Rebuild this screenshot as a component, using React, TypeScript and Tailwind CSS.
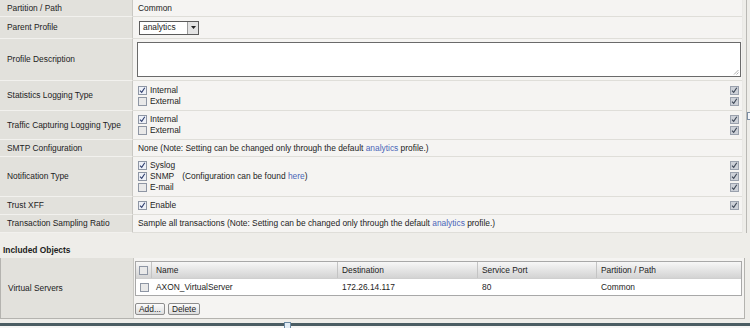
import React from "react";

type Box = { checked?: boolean; dim?: boolean };

function CheckBox({ checked, dim }: Box) {
  return (
    <svg width="9" height="9" viewBox="0 0 9 9" className="shrink-0">
      <rect
        x="0.5"
        y="0.5"
        width="8"
        height="8"
        fill={dim ? "#cdd1d8" : checked ? "#eef1f8" : "#e9e9e9"}
        stroke={dim ? "#9aa1ad" : "#8e96a4"}
      />
      {checked ? (
        <path d="M2 4.6 L3.7 6.4 L6.8 1.8" fill="none" stroke={dim ? "#3d4656" : "#2f3f6f"} strokeWidth="1.1" />
      ) : null}
    </svg>
  );
}

function Link({ children }: { children: React.ReactNode }) {
  return <span className="text-[#4a66b8]">{children}</span>;
}

function Row({
  label,
  h,
  children,
  right,
}: {
  label: string;
  h: string;
  children: React.ReactNode;
  right?: number;
}) {
  return (
    <div className={`flex ${h}`}>
      <div className="flex w-[133px] shrink-0 items-center border-b border-r border-b-[#f2f1ee] border-r-[#c9c8c3] bg-[#e2e1dc] pl-[7px]">
        {label}
      </div>
      <div className="flex flex-1 items-center justify-between border-b border-[#dfded9] bg-[#f5f4f2] pl-[5px] pr-[3px]">
        <div>{children}</div>
        {right ? (
          <div className="flex flex-col gap-[2px]">
            {Array.from({ length: right }).map((_, i) => (
              <CheckBox key={i} checked dim />
            ))}
          </div>
        ) : null}
      </div>
    </div>
  );
}

function CheckLine({ checked, children }: { checked?: boolean; children: React.ReactNode }) {
  return (
    <div className="flex h-[11px] items-center gap-[3px]">
      <CheckBox checked={checked} />
      <span>{children}</span>
    </div>
  );
}

export default function App() {
  return (
    <div className="relative h-[328px] w-[750px] overflow-hidden bg-[#eeede9] font-['Liberation_Sans',Arial,sans-serif] text-[8.4px] leading-none text-[#1c1c1c]">
      <div className="flex">
        <div className="w-[743px] border-r border-[#e9e8e5]">
          <Row label="Partition / Path" h="h-[17px]">
            Common
          </Row>
          <Row label="Parent Profile" h="h-[22px]">
            <div className="ml-[1px] flex h-[14px] w-[60px] items-stretch border border-[#5b5b5b] bg-white">
              <span className="flex flex-1 items-center pl-[3px]">analytics</span>
              <span className="flex w-[11px] items-center justify-center border-l border-[#9a9a9a] bg-[#e3e3e3]">
                <svg width="5" height="3" viewBox="0 0 5 3">
                  <path d="M0 0 H5 L2.5 3 Z" fill="#222" />
                </svg>
              </span>
            </div>
          </Row>
          <div className="flex h-[42px]">
            <div className="flex w-[133px] shrink-0 items-center border-b border-r border-b-[#f2f1ee] border-r-[#c9c8c3] bg-[#e2e1dc] pl-[7px]">
              Profile Description
            </div>
            <div className="flex flex-1 items-center border-b border-[#dfded9] bg-[#f5f4f2] pl-[4px] pr-[1px]">
              <div className="relative h-[35px] w-full border border-[#6a6a6a] bg-white">
                <svg width="6" height="6" viewBox="0 0 6 6" className="absolute bottom-[1px] right-[1px]">
                  <path d="M5.5 1 L1 5.5 M5.5 3.5 L3.5 5.5" stroke="#999" strokeWidth="0.8" />
                </svg>
              </div>
            </div>
          </div>
          <Row label="Statistics Logging Type" h="h-[30px]" right={2}>
            <CheckLine checked>Internal</CheckLine>
            <CheckLine>External</CheckLine>
          </Row>
          <Row label="Traffic Capturing Logging Type" h="h-[29px]" right={2}>
            <CheckLine checked>Internal</CheckLine>
            <CheckLine>External</CheckLine>
          </Row>
          <Row label="SMTP Configuration" h="h-[17px]">
            None (Note: Setting can be changed only through the default <Link>analytics</Link> profile.)
          </Row>
          <Row label="Notification Type" h="h-[40px]" right={3}>
            <CheckLine checked>Syslog</CheckLine>
            <CheckLine checked>
              SNMP<span className="ml-[8px]">(Configuration can be found <Link>here</Link>)</span>
            </CheckLine>
            <CheckLine>E-mail</CheckLine>
          </Row>
          <Row label="Trust XFF" h="h-[18px]" right={1}>
            <CheckLine checked>Enable</CheckLine>
          </Row>
          <Row label="Transaction Sampling Ratio" h="h-[18px]">
            Sample all transactions (Note: Setting can be changed only through the default{" "}
            <Link>analytics</Link> profile.)
          </Row>
        </div>
        <div className="relative flex-1">
          <div className="ml-[3px] h-[233px] w-[1px] bg-[#b9b8b4]" />
          <div className="absolute left-[4px] top-[112px] h-[8px] w-[8px] border border-[#7c8ea3] bg-[#f4f7fb]" />
        </div>
      </div>

      <div className="flex h-[25px] items-end pb-[4px] pl-[3px] font-bold">Included Objects</div>

      <div className="flex h-[61px] w-[745px] border border-t-0 border-[#b4b3af]">
        <div className="flex w-[133px] shrink-0 items-center border-r border-[#c9c8c3] bg-[#e2e1dc] pl-[7px]">
          Virtual Servers
        </div>
        <div className="flex flex-1 flex-col bg-[#f5f4f2] pl-[1px] pr-[2px] pt-[3px]">
          <div className="border border-[#a8a8a8] bg-white">
            <div className="flex h-[16px] bg-gradient-to-b from-[#f7f7f7] to-[#d3d3d3]">
              <div className="flex w-[16px] items-center justify-center border-r border-[#c4c4c4]">
                <CheckBox />
              </div>
              <div className="flex w-[186px] items-center border-r border-[#c4c4c4] pl-[4px]">Name</div>
              <div className="flex w-[140px] items-center border-r border-[#c4c4c4] pl-[4px]">Destination</div>
              <div className="flex w-[119px] items-center border-r border-[#c4c4c4] pl-[4px]">Service Port</div>
              <div className="flex flex-1 items-center pl-[4px]">Partition / Path</div>
            </div>
            <div className="flex h-[17px] border-t border-[#cfcfcf]">
              <div className="flex w-[16px] items-center justify-center">
                <CheckBox />
              </div>
              <div className="flex w-[186px] items-center pl-[4px]">AXON_VirtualServer</div>
              <div className="flex w-[140px] items-center pl-[4px]">172.26.14.117</div>
              <div className="flex w-[119px] items-center pl-[4px]">80</div>
              <div className="flex flex-1 items-center pl-[4px]">Common</div>
            </div>
          </div>
          <div className="mt-[7px] flex gap-[3px]">
            {["Add...", "Delete"].map((b) => (
              <span
                key={b}
                className="flex h-[12px] items-center rounded-[2px] border border-[#8d8d8d] bg-gradient-to-b from-[#fbfbfb] to-[#dedede] px-[3px]"
              >
                {b}
              </span>
            ))}
          </div>
        </div>
      </div>

      <div className="mt-[4px] h-[3px] w-full bg-[#4b5d63]" />
      <div className="h-[10px] bg-[#f6f6f5]" />
      <div className="absolute left-[284px] top-[322px] h-[7px] w-[7px] border border-[#6b8aa3] bg-[#e3edf5]" />
    </div>
  );
}
